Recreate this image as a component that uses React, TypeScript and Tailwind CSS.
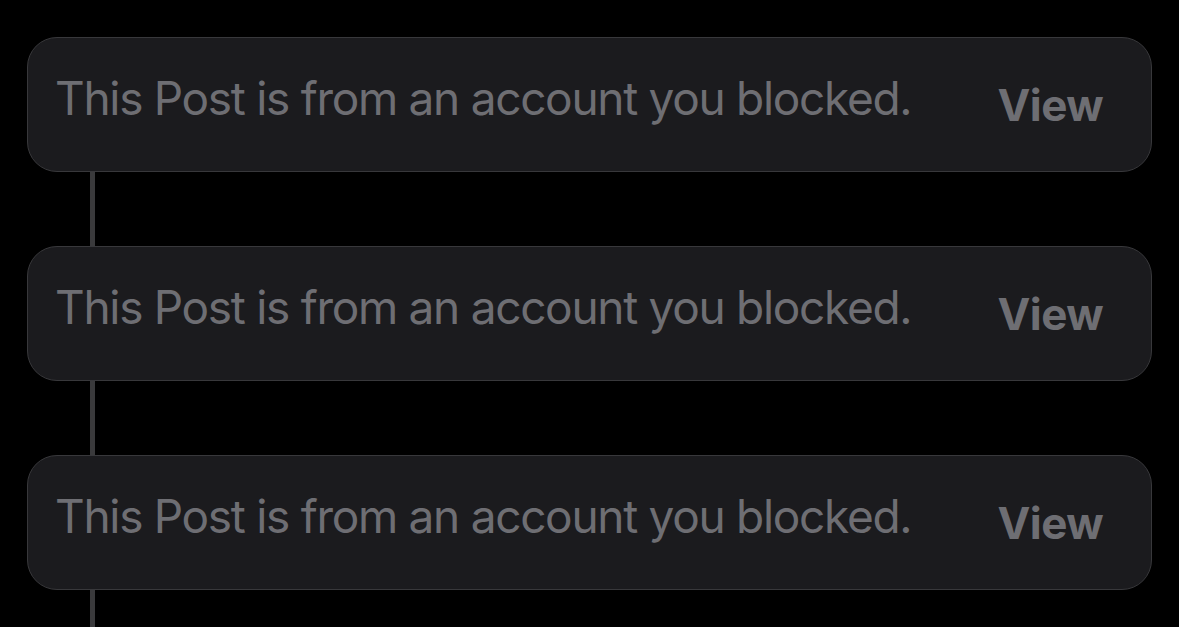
import React from "react";

function Card() {
  return (
    <div className="flex h-[135px] items-center justify-between rounded-[30px] border border-[#38383b] bg-[#1b1b1e] pl-[27px] pr-[48px]">
      <span className="mb-[13px] text-[46px] leading-none tracking-[-1.3px] text-[#6e6e73]">
        This Post is from an account you blocked.
      </span>
      <span className="text-[44px] font-bold leading-none tracking-[-0.6px] text-[#6e6e73]">View</span>
    </div>
  );
}

function Connector() {
  return <div className="ml-[63px] h-[74px] w-[5px] bg-[#3a3a3c]" />;
}

export default function App() {
  return (
    <div
      className="h-[627px] w-[1179px] overflow-hidden bg-black pl-[27px] pr-[27px] pt-[37px]"
      style={{ fontFamily: "Inter, 'Noto Sans', sans-serif" }}
    >
      <Card />
      <Connector />
      <Card />
      <Connector />
      <Card />
      <Connector />
    </div>
  );
}
